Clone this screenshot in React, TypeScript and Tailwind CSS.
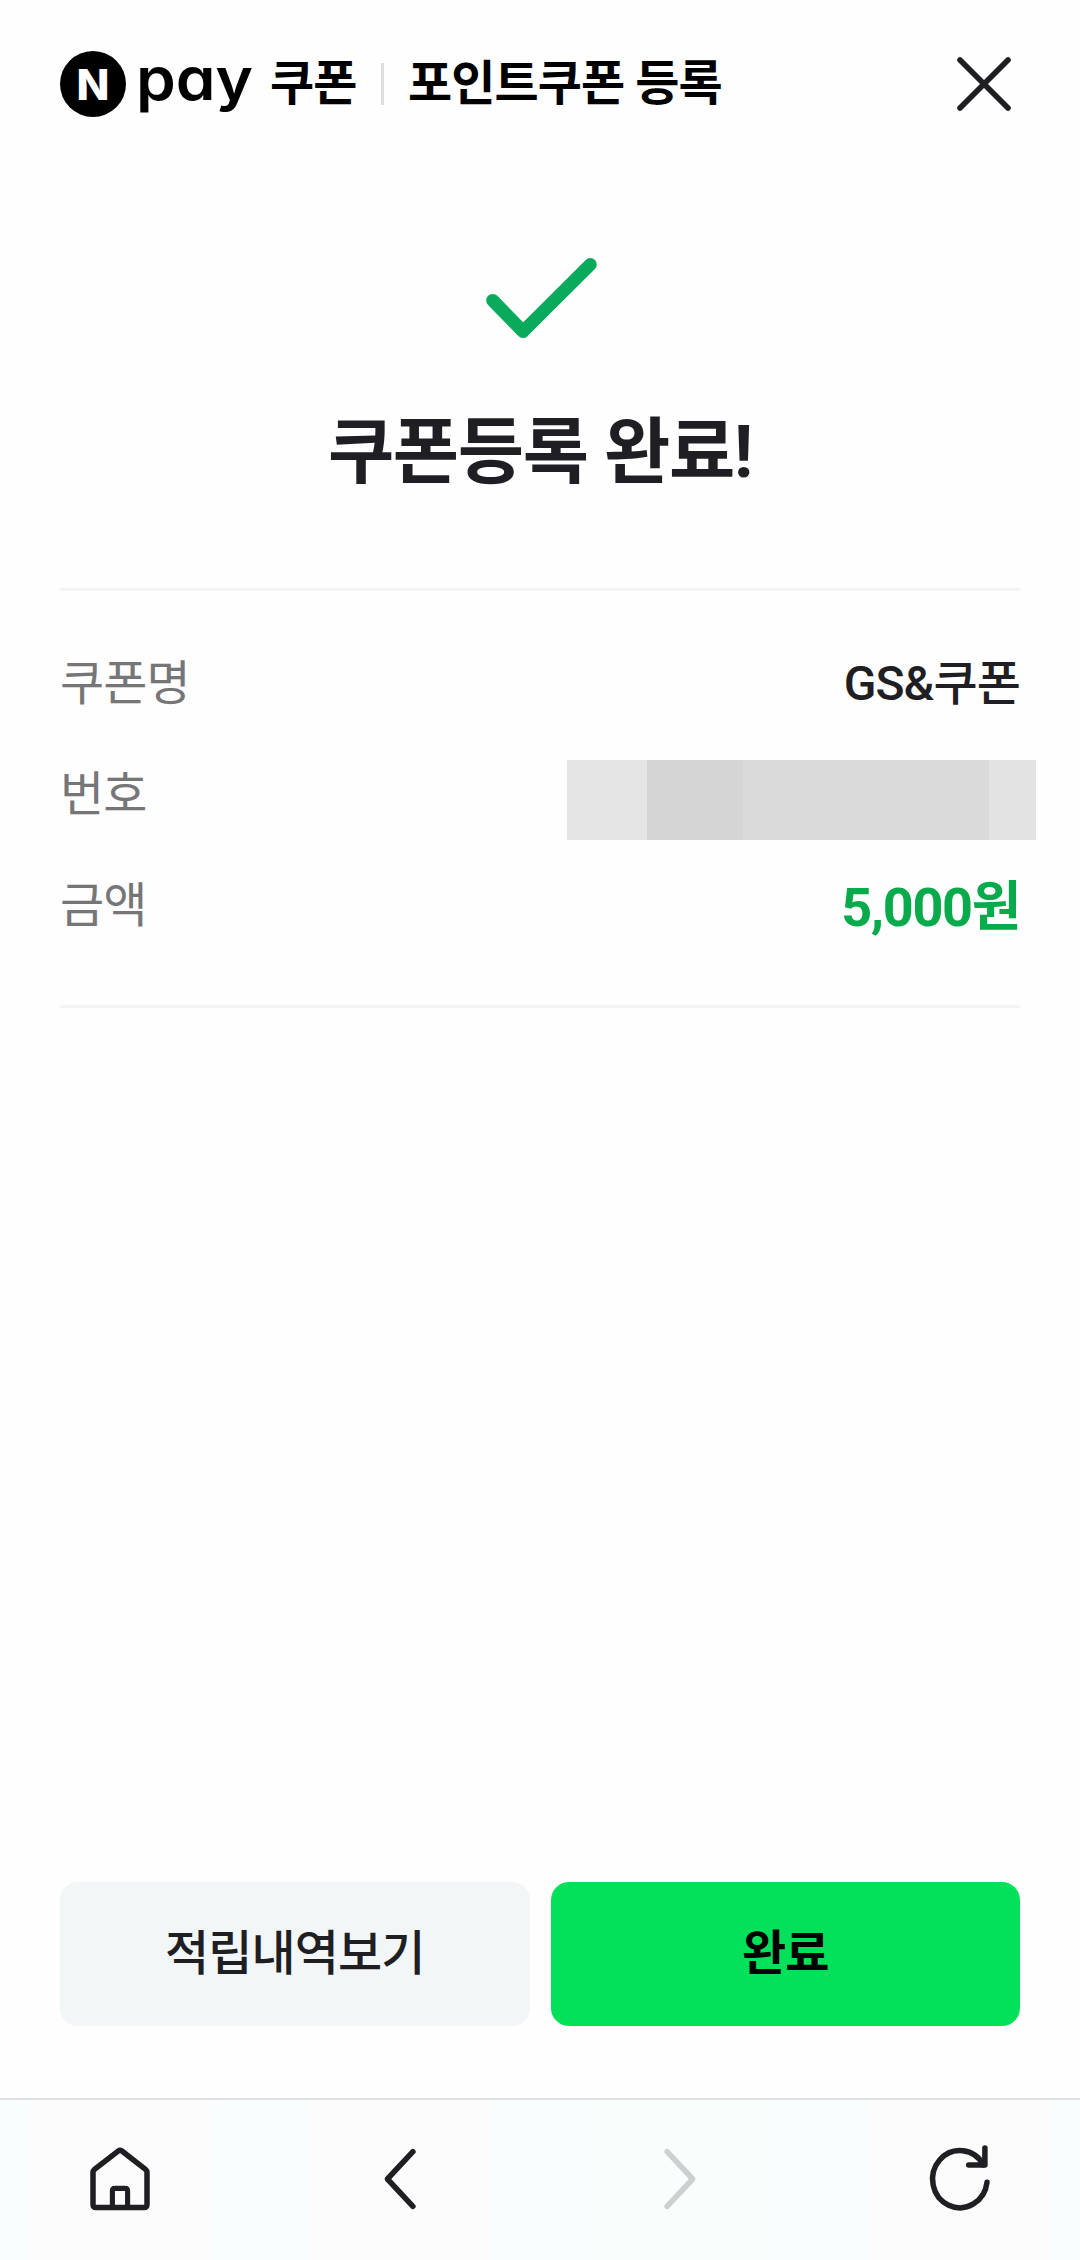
import type { ReactNode } from 'react';

const FONT = "font-[Roboto,'Noto_Sans_CJK_KR',sans-serif]";

const MASK_BLOCKS = [
  'w-[80px] bg-[#e5e5e5]',
  'w-[96px] bg-[#d5d5d5]',
  'w-[246px] bg-[#dadada]',
  'w-[47px] bg-[#e3e3e3]',
];

const NPayLogo = () => (
  <div className="flex items-center">
    <span className="flex size-[66px] items-center justify-center rounded-full bg-black font-[Inter,sans-serif] text-[43px] leading-none font-extrabold text-white">
      N
    </span>
    <span className="ml-[10px] w-[120px] origin-left scale-x-[1.08] pb-[11px] font-[Inter,sans-serif] text-[59px] leading-[62px] font-semibold text-black [font-feature-settings:'cv11','ss03']">
      pay
    </span>
  </div>
);

const Header = () => (
  <header className="flex h-[168px] items-center justify-between px-[60px]">
    <div className="flex items-center">
      <NPayLogo />
      <h1 className="flex items-center text-5xl leading-none font-bold tracking-[-0.9px] whitespace-nowrap text-black">
        <span className="ml-[14px] w-[111px]">쿠폰</span>
        <span className="h-[42px] w-[3px] bg-[#dcdee0]" />
        <span className="ml-[24px]">포인트쿠폰 등록</span>
      </h1>
    </div>
    <button type="button" aria-label="닫기">
      <svg width="72" height="72" viewBox="0 0 72 72" fill="none" stroke="#1e1e23" strokeWidth="5.6" strokeLinecap="round">
        <path d="M12 12L60 60M60 12L12 60" />
      </svg>
    </button>
  </header>
);

type RowProps = {
  label: string;
  children: ReactNode;
};

const Row = ({ label, children }: RowProps) => (
  <div className="flex h-[111px] items-center justify-between text-5xl leading-none tracking-[-0.9px]">
    <dt className="text-[#767678]">{label}</dt>
    {children}
  </div>
);

type NavButtonProps = {
  label: string;
  disabled?: boolean;
  children: ReactNode;
};

const NavButton = ({ label, disabled, children }: NavButtonProps) => (
  <button
    type="button"
    aria-label={label}
    disabled={disabled}
    className="flex h-full w-[182px] items-center justify-center bg-[#fcfcfc] text-[#1e1e23] disabled:bg-[#f9fdfc] disabled:text-[#cdd0d0]">
    <svg
      width="80"
      height="80"
      viewBox="0 0 80 80"
      fill="none"
      stroke="currentColor"
      strokeWidth="5.5"
      strokeLinecap="round"
      strokeLinejoin="round">
      {children}
    </svg>
  </button>
);

const BottomNav = () => (
  <nav className="flex h-[162px] items-center justify-between border-t-2 border-[#dfe1e2] bg-[#f9fdfe] px-[29px]">
    <NavButton label="홈">
      <path d="M13 32.5q0-2 1.5-3.2L38.4 10.8q1.6-1.2 3.2 0L65.5 29.3q1.5 1.2 1.5 3.2V64.5q0 3-3 3H16q-3 0-3-3Z" />
      <path d="M32.4 66V51q0-2.6 2.6-2.6h10q2.6 0 2.6 2.6V66" strokeWidth="5.1" />
    </NavButton>
    <NavButton label="뒤로">
      <path d="M52.9 11.7L27.4 39L52.9 66.3" />
    </NavButton>
    <NavButton label="앞으로" disabled>
      <path d="M27.1 11.7L52.7 39L27.1 66.3" />
    </NavButton>
    <NavButton label="새로고침">
      <path d="M67 42.3A27.3 28.6 0 1 1 63.5 24.8" />
      <path d="M64.9 8V25H48.7" />
    </NavButton>
  </nav>
);

const App = () => (
  <div className={`flex h-[2260px] w-[1080px] flex-col overflow-hidden bg-[#fefefe] text-[#1e1e23] ${FONT}`}>
    <Header />

    <main className="flex flex-1 flex-col px-[60px]">
      <svg
        className="mx-auto mt-[90px]"
        width="120"
        height="80"
        viewBox="0 0 120 80"
        fill="none"
        stroke="#09aa5c"
        strokeWidth="13"
        strokeLinecap="round"
        strokeLinejoin="round">
        <path d="M12.7 42.4L43 73.5L110.3 6.5" />
      </svg>
      <h2 className="mt-[72px] text-center text-7xl leading-[86px] font-bold tracking-[-1.35px]">쿠폰등록 완료!</h2>

      <dl className="mt-[92px] border-y-3 border-[#f2f4f5] pt-[37px] pb-[44px]">
        <Row label="쿠폰명">
          <dd className="font-medium">GS&amp;쿠폰</dd>
        </Row>
        <Row label="번호">
          <dd className="mt-[11px] -mr-[16px] flex h-[80px]" aria-label="비공개">
            {MASK_BLOCKS.map((block) => (
              <span key={block} className={block} />
            ))}
          </dd>
        </Row>
        <Row label="금액">
          <dd className="pt-[4px] text-[54px] leading-none font-bold tracking-[-1.35px] text-[#09aa4c]">5,000원</dd>
        </Row>
      </dl>

      <div className="mt-auto flex gap-[21px] pb-[72px] text-5xl leading-none tracking-[-0.9px]">
        <button type="button" className="h-[144px] flex-1 rounded-[18px] bg-[#f2f6f7] font-medium">
          적립내역보기
        </button>
        <button type="button" className="h-[144px] flex-1 rounded-[18px] bg-[#03e15b] font-bold text-black">
          완료
        </button>
      </div>
    </main>

    <BottomNav />
  </div>
);

export default App;
